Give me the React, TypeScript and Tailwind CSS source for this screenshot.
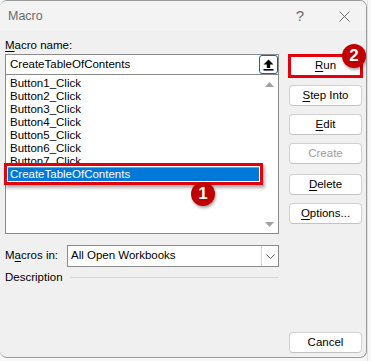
const macros = [
  "Button1_Click",
  "Button2_Click",
  "Button3_Click",
  "Button4_Click",
  "Button5_Click",
  "Button6_Click",
  "Button7_Click",
  "CreateTableOfContents",
];

function Key({ children }: { children: React.ReactNode }) {
  return <span className="underline underline-offset-[2px]">{children}</span>;
}

function DlgButton({
  children,
  disabled,
  className = "",
}: {
  children: React.ReactNode;
  disabled?: boolean;
  className?: string;
}) {
  return (
    <div
      className={`flex h-[21px] w-[73px] items-center justify-center rounded-[4px] border border-[#d0d0d0] border-b-[#c2c2c2] bg-white ${
        disabled ? "text-[#9d9d9d] bg-[#fbfbfb]" : "text-black"
      } ${className}`}
    >
      {children}
    </div>
  );
}

function Badge({ n, className = "" }: { n: string; className?: string }) {
  return (
    <div
      className={`absolute flex h-[24px] w-[24px] items-center justify-center rounded-full bg-[#c00000] text-[17px] font-bold text-white shadow-[1px_2px_3px_rgba(0,0,0,0.35)] font-['Liberation_Sans',Arial,sans-serif] ${className}`}
    >
      {n}
    </div>
  );
}

export default function App() {
  return (
    <div className="flex h-[361px] w-[371px] bg-[#f7f7f7] text-[11.5px] text-black font-['Liberation_Sans',Arial,sans-serif]">
      <div className="flex h-[358px] w-[367px] flex-col overflow-hidden rounded-[7px] border border-l-0 border-[#9a9a9a] bg-[#f0f0f0]">
        {/* title bar */}
        <div className="flex h-[30px] items-center bg-[#f3f3f3] pl-[8px]">
          <span className="text-[12.5px] text-[#6b6b6b]">Macro</span>
          <span className="ml-auto mr-[35px] text-[15px] text-[#6b6b6b]">?</span>
          <svg width="11" height="11" viewBox="0 0 11 11" className="mr-[16px]">
            <path d="M0.5 0.5L10.5 10.5M10.5 0.5L0.5 10.5" stroke="#6b6b6b" strokeWidth="1" />
          </svg>
        </div>

        {/* body */}
        <div className="flex flex-1 pb-[4px] pl-[5px]">
          {/* left column */}
          <div className="flex w-[274px] flex-col pt-[7px]">
            <div className="leading-[14px]">
              <Key>M</Key>acro name:
            </div>
            <div className="mt-[2px] flex h-[21px] items-center border border-[#8a8a8a] bg-white pl-[4px]">
              <span className="flex-1">CreateTableOfContents</span>
              <div className="flex h-[19px] w-[19px] items-center justify-center rounded-[3px] border-[1.5px] border-[#0067c0] bg-white">
                <svg width="11" height="12" viewBox="0 0 11 12">
                  <path d="M5.5 0.5L10.5 5.5H7.2V9H3.8V5.5H0.5Z" fill="#000" />
                  <rect x="0.5" y="10" width="10" height="1.6" fill="#000" />
                </svg>
              </div>
            </div>
            <div className="relative flex h-[159px] border border-t-0 border-[#8a8a8a] bg-white">
              <div className="flex-1 pl-[4px] pt-[2px]">
                {macros.map((m) => (
                  <div key={m} className="h-[13px] leading-[13px]">
                    {m}
                  </div>
                ))}
              </div>
              <div className="flex w-[17px] flex-col items-center justify-between pb-[6px] pt-[7px]">
                <svg width="9" height="5" viewBox="0 0 9 5">
                  <path d="M4.5 0L9 5H0Z" fill="#a3a3a3" />
                </svg>
                <svg width="9" height="5" viewBox="0 0 9 5">
                  <path d="M0 0H9L4.5 5Z" fill="#a3a3a3" />
                </svg>
              </div>

              {/* highlighted selection */}
              <div className="absolute left-[-2px] top-[88px] h-[22px] w-[259px] border-[3px] border-[#e3000b] bg-white p-px shadow-[2px_3px_3px_rgba(0,0,0,0.3)]">
                <div className="h-[14px] border-t border-[#8f9aa6] bg-[#0078d7] pl-[2px] leading-[13px] text-white">
                  CreateTableOfContents
                </div>
              </div>
              <Badge n="1" className="left-[185px] top-[107px]" />
            </div>

            <div className="mt-[11px] flex items-center">
              <div className="w-[62px]">
                M<Key>a</Key>cros in:
              </div>
              <div className="flex h-[22px] flex-1 items-center border border-[#8a8a8a] bg-white pl-[3px]">
                <span className="flex-1">All Open Workbooks</span>
                <div className="flex h-full w-[17px] items-center justify-center border-l border-[#d6d6d6]">
                  <svg width="9" height="5" viewBox="0 0 9 5">
                    <path d="M0.5 0.5L4.5 4.5L8.5 0.5" stroke="#606060" strokeWidth="1" fill="none" />
                  </svg>
                </div>
              </div>
            </div>
            <div className="mt-[3px] flex items-center leading-[14px]">
              <span>Description</span>
              <div className="ml-[7px] h-px flex-1 bg-[#d9d9d9]" />
            </div>
          </div>

          {/* right column */}
          <div className="ml-[9px] flex w-[75px] flex-col pt-[23px]">
            <div className="relative">
              <div className="flex h-[24px] w-[75px] items-center justify-center border-[3px] border-[#e3000b] bg-white">
                <Key>R</Key>un
              </div>
              <Badge n="2" className="left-[54px] top-[-10px]" />
            </div>
            <div className="flex flex-col items-end gap-[8px] pr-px pt-[7px]">
              <DlgButton>
                <Key>S</Key>tep Into
              </DlgButton>
              <DlgButton>
                <Key>E</Key>dit
              </DlgButton>
              <DlgButton disabled>Create</DlgButton>
              <DlgButton className="mt-[2px]">
                <Key>D</Key>elete
              </DlgButton>
              <DlgButton>
                <Key>O</Key>ptions...
              </DlgButton>
            </div>
            <div className="mt-auto flex justify-end pr-px">
              <DlgButton>Cancel</DlgButton>
            </div>
          </div>
        </div>
      </div>
      <div className="flex-1 border-l border-[#e2e2e2] bg-[#f8f8f8]" />
    </div>
  );
}
